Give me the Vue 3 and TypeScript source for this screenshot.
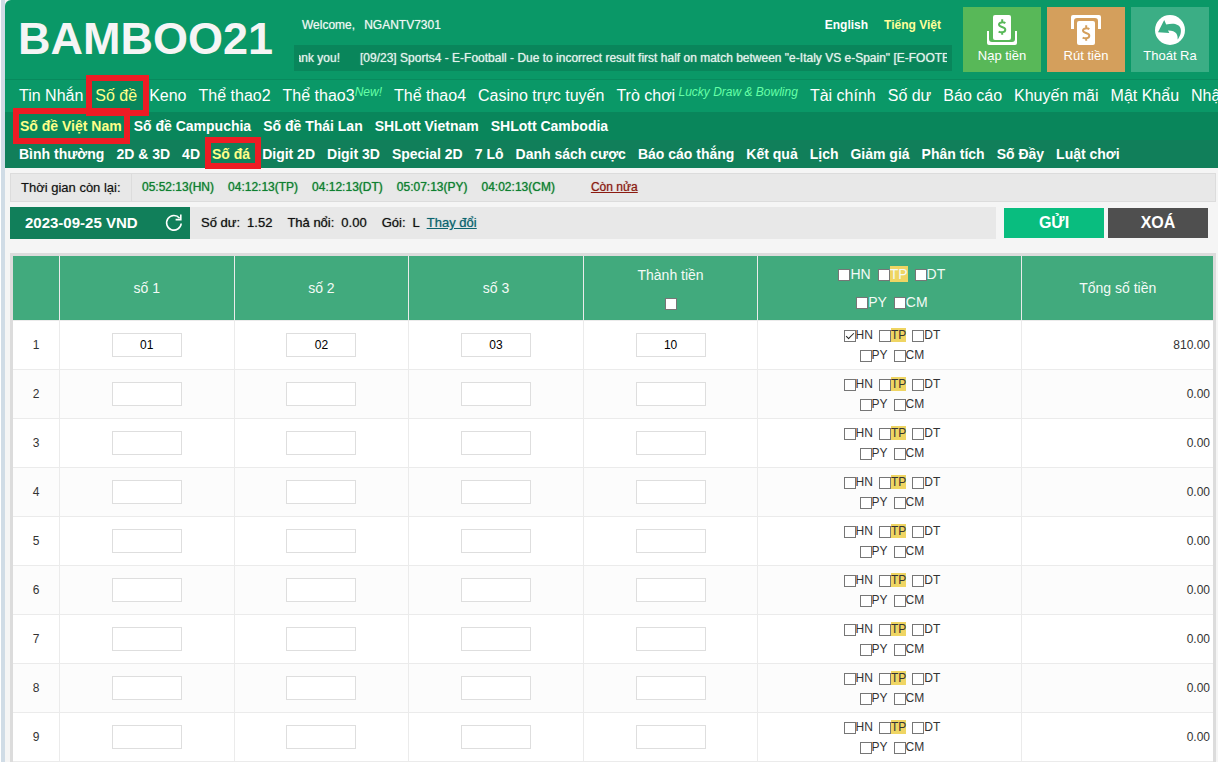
<script setup lang="ts">
import { reactive, ref } from 'vue'

interface NavItem {
  label: string
  note?: string
  active?: boolean
}

interface BetRow {
  id: number
  numbers: string[]
  stake: string
  picks: string[]
  total: string
}

const mainNav: NavItem[] = [
  { label: 'Tin Nhắn' },
  { label: 'Số đề', active: true },
  { label: 'Keno' },
  { label: 'Thể thao2' },
  { label: 'Thể thao3', note: 'New!' },
  { label: 'Thể thao4' },
  { label: 'Casino trực tuyến' },
  { label: 'Trò chơi', note: ' Lucky Draw & Bowling' },
  { label: 'Tài chính' },
  { label: 'Số dư' },
  { label: 'Báo cáo' },
  { label: 'Khuyến mãi' },
  { label: 'Mật Khẩu' },
  { label: 'Nhật ký' },
]

const regionNav: NavItem[] = [
  { label: 'Số đề Việt Nam', active: true },
  { label: 'Số đề Campuchia' },
  { label: 'Số đề Thái Lan' },
  { label: 'SHLott Vietnam' },
  { label: 'SHLott Cambodia' },
]

const gameNav: NavItem[] = [
  { label: 'Bình thường' },
  { label: '2D & 3D' },
  { label: '4D' },
  { label: 'Số đá', active: true },
  { label: 'Digit 2D' },
  { label: 'Digit 3D' },
  { label: 'Special 2D' },
  { label: '7 Lô' },
  { label: 'Danh sách cược' },
  { label: 'Báo cáo thắng' },
  { label: 'Kết quả' },
  { label: 'Lịch' },
  { label: 'Giảm giá' },
  { label: 'Phân tích' },
  { label: 'Số Đầy' },
  { label: 'Luật chơi' },
]

const timers = ['05:52:13(HN)', '04:12:13(TP)', '04:12:13(DT)', '05:07:13(PY)', '04:02:13(CM)']

const stationLines = [
  ['HN', 'TP', 'DT'],
  ['PY', 'CM'],
]

const rows = reactive<BetRow[]>(
  Array.from({ length: 9 }, (_, i) => ({
    id: i + 1,
    numbers: i === 0 ? ['01', '02', '03'] : ['', '', ''],
    stake: i === 0 ? '10' : '',
    picks: i === 0 ? ['HN'] : [],
    total: i === 0 ? '810.00' : '0.00',
  })),
)

const allStations = ref<string[]>([])
const sameStake = ref(false)

function clearAll() {
  for (const row of rows) {
    row.numbers = ['', '', '']
    row.stake = ''
    row.picks = []
    row.total = '0.00'
  }
}
</script>

<template>
  <div class="page">
    <header class="header">
      <div class="top">
        <h1 class="brand">BAMBOO21</h1>
        <div class="info">
          <div class="user-line">
            <span>Welcome,</span>
            <span>NGANTV7301</span>
            <span class="langs">
              <a href="#" class="lang">English</a>
              <a href="#" class="lang current">Tiếng Việt</a>
            </span>
          </div>
          <div class="ticker">
            <div class="ticker-view">
              <span class="leaving"><span>Thank you!</span></span>
              <span>[09/23] Sports4 - E-Football - Due to incorrect result first half on match between "e-Italy VS e-Spain" [E-FOOTBALL]</span>
            </div>
          </div>
        </div>
        <div class="actions">
          <button type="button" class="action deposit">
            <svg viewBox="0 0 30 30" width="30" height="30" aria-hidden="true">
              <path d="M0 16H2V24Q2 27 5 27H25Q28 27 28 24V16H30V28Q30 30 28 30H2Q0 30 0 28Z" fill="#fff" />
              <rect x="6" y="0" width="18" height="25" rx="2" fill="#fff" />
              <path d="M18.300 8.200C17.200 7.200 12 6.600 12 9.600C12 12.700 18.300 11.300 18.300 14.800C18.300 18 13 17.700 11.700 16.500M15.200 4.300V7M15.200 17.300V19.800" fill="none" stroke="#58b858" stroke-width="2" />
            </svg>
            <span>Nạp tiền</span>
          </button>
          <button type="button" class="action withdraw">
            <svg viewBox="0 0 30 30" width="30" height="30" aria-hidden="true">
              <path d="M0 14H3V6Q3 3 6 3H24Q27 3 27 6V14H30V2Q30 0 28 0H2Q0 0 0 2Z" fill="#fff" />
              <rect x="6" y="6" width="18" height="24" rx="2" fill="#fff" />
              <path d="M18.300 14.200C17.200 13.200 12 12.600 12 15.600C12 18.700 18.300 17.300 18.300 20.800C18.300 24 13 23.700 11.700 22.500M15.200 10.300V13M15.200 23.300V25.800" fill="none" stroke="#d49f5c" stroke-width="2" />
            </svg>
            <span>Rút tiền</span>
          </button>
          <button type="button" class="action logout">
            <svg viewBox="0 0 30 30" width="30" height="30" aria-hidden="true">
              <circle cx="15" cy="15" r="15" fill="#fff" />
              <path d="M3 17.200L9.200 5L11.200 9.600C18 7.800 24 8.600 25.600 13.500C26.600 17.500 25 21.500 22.600 24.600C23 20 21.500 15.500 13 15.600L14.300 18Z" fill="#3bae85" />
            </svg>
            <span>Thoát Ra</span>
          </button>
        </div>
      </div>

      <nav class="nav main-nav">
        <a v-for="item in mainNav" :key="item.label" href="#" :class="{ active: item.active }">{{ item.label }}<em v-if="item.note">{{ item.note }}</em></a>
      </nav>
      <nav class="nav region-nav">
        <a v-for="item in regionNav" :key="item.label" href="#" :class="{ active: item.active }">{{ item.label }}</a>
      </nav>
      <nav class="nav game-nav">
        <a v-for="item in gameNav" :key="item.label" href="#" :class="{ active: item.active }">{{ item.label }}</a>
      </nav>
    </header>

    <main class="content">
      <section class="time-bar">
        <span class="time-title">Thời gian còn lại:</span>
        <span class="timers">
          <span v-for="t in timers" :key="t">{{ t }}</span>
          <a href="#" class="more">Còn nửa</a>
        </span>
      </section>

      <section class="status">
        <div class="status-info">
          <div class="date">
            <span>2023-09-25 VND</span>
            <button type="button" class="refresh" aria-label="Refresh">
              <svg viewBox="0 0 18 18" width="18" height="18" aria-hidden="true">
                <path d="M14.600 4.200A7.300 7.300 0 1 0 16.200 9.500" fill="none" stroke="#fff" stroke-width="1.600" />
                <path d="M15.800 0.600V5.600H10.600" fill="none" stroke="#fff" stroke-width="1.600" />
              </svg>
            </button>
          </div>
          <div class="balances">
            <div><span>Số dư:</span><span>1.52</span></div>
            <div><span>Thả nổi:</span><span>0.00</span></div>
            <div><span>Gói:</span><span>L</span><a href="#">Thay đổi</a></div>
          </div>
        </div>
        <div class="buttons">
          <button type="button" class="send">GỬI</button>
          <button type="button" class="clear" @click="clearAll">XOÁ</button>
        </div>
      </section>

      <table class="bets">
        <colgroup>
          <col class="c-id" />
          <col class="c-num" />
          <col class="c-num" />
          <col class="c-num" />
          <col class="c-num" />
          <col class="c-station" />
          <col class="c-total" />
        </colgroup>
        <thead>
          <tr>
            <th></th>
            <th>số 1</th>
            <th>số 2</th>
            <th>số 3</th>
            <th>
              <label class="stake-head">
                <span>Thành tiền</span>
                <input v-model="sameStake" type="checkbox" />
              </label>
            </th>
            <th>
              <div v-for="(line, n) in stationLines" :key="n" class="stations">
                <label v-for="s in line" :key="s">
                  <input v-model="allStations" type="checkbox" :value="s" />
                  <span :class="{ mark: s === 'TP' }">{{ s }}</span>
                </label>
              </div>
            </th>
            <th>Tổng số tiền</th>
          </tr>
        </thead>
        <tbody>
          <tr v-for="row in rows" :key="row.id">
            <td>{{ row.id }}</td>
            <td v-for="k in 3" :key="k">
              <input v-model="row.numbers[k - 1]" type="text" class="box" :aria-label="`số ${k}, ${row.id}`" />
            </td>
            <td>
              <input v-model="row.stake" type="text" class="box" :aria-label="`Thành tiền, ${row.id}`" />
            </td>
            <td>
              <div v-for="(line, n) in stationLines" :key="n" class="stations">
                <label v-for="s in line" :key="s">
                  <input v-model="row.picks" type="checkbox" :value="s" />
                  <span :class="{ mark: s === 'TP' }">{{ s }}</span>
                </label>
              </div>
            </td>
            <td class="total">{{ row.total }}</td>
          </tr>
        </tbody>
      </table>
    </main>
  </div>
</template>

<style>
body {
  margin: 0;
  background: #fff;
}
</style>

<style scoped>
.page {
  box-sizing: border-box;
  min-height: 100vh;
  margin-left: 1px;
  border-left: 4px solid #d0dce6;
  background: #f5f5f5;
  color: #111;
  font: 12px/16px "Liberation Sans", Arial, sans-serif;
}

button {
  padding: 0;
  border: 0;
  font-family: inherit;
  cursor: pointer;
}

.header {
  border-top-left-radius: 6px;
  background: #0a9867;
  overflow-x: clip;
}

.top {
  display: flex;
  height: 79px;
  border-bottom: 1px solid #088a5d;
}

.brand {
  width: 289px;
  flex: none;
  box-sizing: border-box;
  margin: 0;
  padding-left: 13px;
  color: #f5f5f5;
  font-size: 45px;
  line-height: 78px;
}

.info {
  flex: 1;
  min-width: 0;
}

.user-line {
  display: flex;
  gap: 9px;
  height: 45px;
  padding: 0 11px 0 8px;
  box-sizing: border-box;
  color: #f0f8f4;
  line-height: 50px;
  text-shadow: 0 0 1px rgba(240, 248, 244, 0.6);
}

.langs {
  display: flex;
  gap: 16px;
  margin-left: auto;
  text-shadow: none;
}

.lang {
  color: #fff;
  font-weight: bold;
  text-decoration: none;
}

.lang.current {
  color: #ffff99;
}

.ticker {
  padding: 0 5px;
  background: #09865b;
}

.ticker-view {
  display: flex;
  gap: 20px;
  overflow: hidden;
  color: #e3f2ec;
  line-height: 26px;
  text-shadow: 0 0 1px rgba(227, 242, 236, 0.8);
  white-space: nowrap;
}

.leaving {
  display: flex;
  flex: none;
  justify-content: flex-end;
  width: 41px;
  overflow: hidden;
}

.actions {
  display: flex;
  flex: none;
  gap: 6px;
  padding: 7px 9px 0 11px;
}

.action {
  display: flex;
  flex-direction: column;
  align-items: center;
  gap: 3px;
  width: 78px;
  height: 65px;
  padding-top: 8px;
  color: #fff;
  font-size: 13px;
  line-height: 16px;
}

.deposit {
  background: #58b858;
}

.withdraw {
  background: #d49f5c;
}

.logout {
  background: #3bae85;
}

.nav {
  display: flex;
  padding-left: 8px;
  white-space: nowrap;
}

.nav a {
  position: relative;
  flex: none;
  padding: 0 6px;
  color: #fff;
  text-decoration: none;
}

.nav a.active {
  color: #ffff88;
}

/* red frame around the current entry of each menu */
.nav a.active::after {
  content: "";
  position: absolute;
  inset: -5px -6px -4px -3px;
  border: 6px solid #ee1c24;
  z-index: 1;
}

.main-nav {
  font-size: 16px;
  line-height: 32px;
}

.main-nav a.active {
  background: #09865b;
}

.main-nav em {
  color: #66ffa6;
  font-size: 12px;
  line-height: 12px;
  vertical-align: 5px;
  white-space: pre;
}

.region-nav,
.game-nav {
  font-size: 14px;
  font-weight: bold;
  line-height: 28px;
}

.region-nav {
  padding-left: 9px;
  background: #09865b;
}

.region-nav a.active::after {
  inset: -4px -2px -4px -1px;
}

.game-nav {
  background: #117f5a;
}

.game-nav a.active::after {
  inset: -3px -5px -1px -1px;
}

.content {
  padding: 5px 2px 0 5px;
}

.time-bar {
  display: flex;
  border: 1px solid #dcdcdc;
  background: #e8e8e8;
  line-height: 27px;
}

.time-title {
  width: 121px;
  box-sizing: border-box;
  padding-left: 10px;
  border-right: 1px solid #dcdcdc;
  font-size: 13px;
  text-shadow: 0 0 1px rgba(17, 17, 17, 0.4);
}

.timers {
  display: flex;
  gap: 14px;
  padding-left: 10px;
  color: #0d8030;
  text-shadow: 0 0 1px rgba(13, 128, 48, 0.8);
}

.more {
  margin-left: 22px;
  color: #8b1a10;
  text-shadow: 0 0 1px rgba(139, 26, 16, 0.6);
}

.status {
  display: flex;
  align-items: center;
  gap: 8px;
  margin-top: 5px;
  padding-right: 8px;
}

.status-info {
  display: flex;
  flex: 1;
  background: #e8e8e8;
}

.date {
  display: flex;
  align-items: center;
  justify-content: space-between;
  width: 180px;
  height: 32px;
  box-sizing: border-box;
  padding: 0 7px 0 15px;
  background: #117f5a;
  color: #fff;
  font-size: 15px;
  font-weight: bold;
}

.refresh {
  display: flex;
  background: none;
}

.balances {
  display: flex;
  gap: 15px;
  padding-left: 11px;
  font-size: 13px;
  line-height: 32px;
  text-shadow: 0 0 1px rgba(17, 17, 17, 0.6);
}

.balances div {
  display: flex;
  gap: 7px;
}

.balances a {
  color: #0b6470;
  text-shadow: 0 0 1px rgba(11, 100, 112, 0.6);
}

.buttons {
  display: flex;
  gap: 4px;
}

.buttons button {
  width: 100px;
  height: 30px;
  color: #fff;
  font-size: 16px;
  font-weight: bold;
}

.send {
  background: #09bd7f;
}

.clear {
  background: #4f4f4f;
}

.bets {
  width: 100%;
  margin-top: 14px;
  border: solid #dcdcdc;
  border-width: 3px 3px 0;
  border-collapse: separate;
  border-spacing: 0;
  table-layout: fixed;
  background: #fff;
}

.c-id {
  width: 47px;
}

.c-num {
  width: 14.550%;
}

.c-station {
  width: 22%;
}

.bets th,
.bets td {
  padding: 0;
  border-right: 1px solid #ebebeb;
  border-bottom: 1px solid #ebebeb;
  text-align: center;
}

.bets th:last-child,
.bets td:last-child {
  border-right: 0;
}

.bets th {
  height: 64px;
  background: #41aa7d;
  color: #f3faf6;
  font-size: 14px;
  font-weight: normal;
}

.bets td {
  height: 48px;
  color: #333;
}

.bets tbody tr:nth-child(even) {
  background: #fcfcfc;
}

.bets td.total {
  padding-right: 3px;
  text-align: right;
}

.box {
  display: block;
  width: 70px;
  height: 24px;
  box-sizing: border-box;
  margin: 0 auto;
  padding: 0;
  border: 1px solid #dedede;
  background: #fff;
  color: #000;
  font: inherit;
  text-align: center;
}

input[type="checkbox"] {
  display: block;
  flex: none;
  width: 12px;
  height: 12px;
  box-sizing: border-box;
  margin: 0;
  border: 1px solid #767676;
  background: #fff;
  appearance: none;
}

input[type="checkbox"]:checked::before {
  content: "";
  display: block;
  width: 7px;
  height: 3px;
  margin: 2px 0 0 1px;
  border-bottom: 1px solid #222;
  border-left: 1px solid #222;
  transform: rotate(-45deg);
}

.stake-head {
  display: flex;
  flex-direction: column;
  align-items: center;
  gap: 15px;
}

.stations {
  display: flex;
  align-items: center;
  justify-content: center;
  gap: 6px;
  height: 20px;
  padding-left: 4px;
}

.stations label {
  display: flex;
  align-items: flex-start;
}

.stations span {
  line-height: 14px;
}

.stations input[type="checkbox"] {
  margin-top: 2px;
}

th .stations {
  gap: 7px;
  height: 28px;
}

th .stations span {
  line-height: 16px;
}

th .stations input[type="checkbox"] {
  margin-top: 3px;
}

.mark {
  background: #efd563;
}
</style>
